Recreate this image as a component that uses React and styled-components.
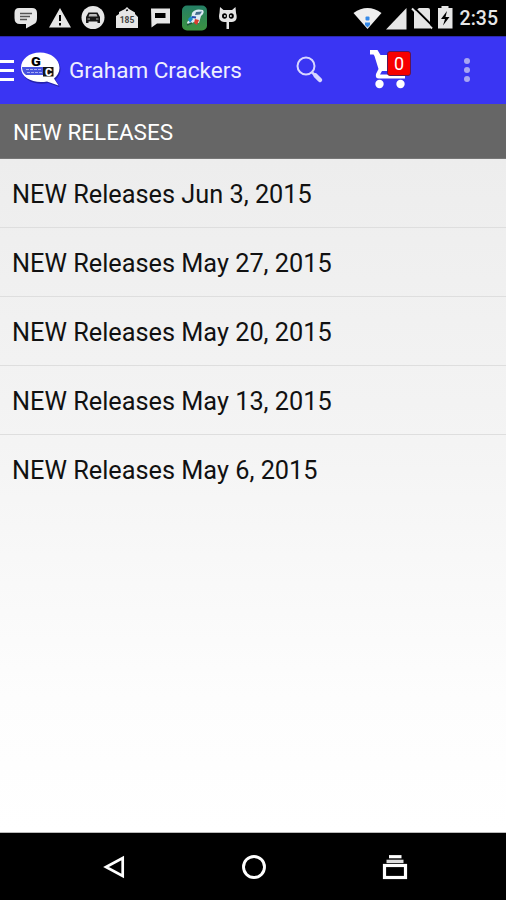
import React from "react";
import styled, { createGlobalStyle } from "styled-components";

const releases = [
  "NEW Releases Jun 3, 2015",
  "NEW Releases May 27, 2015",
  "NEW Releases May 20, 2015",
  "NEW Releases May 13, 2015",
  "NEW Releases May 6, 2015",
];

function StatusBar() {
  return (
    <StatusContainer>
      <Notifications>
        <svg width="24" height="26" viewBox="0 0 24 26" fill="#e6e6e6">
          <path d="M5 3H18Q23 3 23 8V13Q23 18 20 19L12 23.5V19H6Q0.500 19 0.500 13V8Q0.500 3 5 3Z" />
          <path d="M6 8.500H18M6 11.500H16M6 14.500H13" stroke="#555" strokeWidth="1.500" />
        </svg>
        <svg width="24" height="26" viewBox="0 0 24 26" fill="#e6e6e6">
          <path d="M12 3L23 22.500H1Z" />
          <path d="M12 10V16M12 18V20.500" stroke="#000" strokeWidth="2" />
        </svg>
        <svg width="24" height="26" viewBox="0 0 24 26">
          <circle cx="12" cy="12.500" r="11.500" fill="#e6e6e6" />
          <path
            d="M7.500 7.500H16.500L19 12V18H16.500V16.500H7.500V18H5V12Z"
            fill="#161616"
          />
          <path d="M8.500 9H15.500L16.500 11.500H7.500Z" fill="#bbb" />
          <path d="M6.500 14H9M15 14H17.500" stroke="#aaa" strokeWidth="1.200" />
        </svg>
        <svg width="24" height="26" viewBox="0 0 24 26">
          <path d="M1 11L4 9V7L10 4L12 2L14 4L20 7.500V9L23 12V23H1Z" fill="#e6e6e6" />
          <path d="M11 5.500L13 5" stroke="#111" strokeWidth="1.500" />
          <text x="12" y="18" textAnchor="middle" fontSize="8.500" fontWeight="700" fill="#444">
            185
          </text>
        </svg>
        <svg width="24" height="26" viewBox="0 0 24 26" fill="#e6e6e6">
          <path
            d="M2 3.500H21V18.500H8L2.500 22.500ZM6 8V13H16.500V8Z"
            fillRule="evenodd"
          />
        </svg>
        <svg width="26" height="26" viewBox="0 0 26 26">
          <defs>
            <linearGradient id="badge" x1="0" y1="0" x2="0" y2="1">
              <stop offset="0" stopColor="#247f65" />
              <stop offset="1" stopColor="#3c9240" />
            </linearGradient>
          </defs>
          <rect x="0" y="0.500" width="25" height="25" rx="5" fill="url(#badge)" />
          <path d="M10 8Q13 3 21 5Q23 8 19 11L17 18L12 17L6 20L5 17L9 14Z" fill="#dceaf2" />
          <path d="M14 7L20 6.500L18 9.500L13 10Z" fill="#426c8d" />
          <path d="M6 14L9 11L11 14L8 18Z" fill="#1c8cc9" />
          <path d="M13 14L17 15L15 20L12 18Z" fill="#d93c2f" />
          <path d="M10 12L14 12.500" stroke="#2549ad" strokeWidth="2" />
          <path d="M5 20L10 18" stroke="#20563b" strokeWidth="1.500" />
        </svg>
        <svg width="22" height="26" viewBox="0 0 22 26" fill="#e6e6e6">
          <path d="M2 2L5.500 5H14L17.500 2L18 8Q20.500 16 14 17H11V24H8.500V17H6Q-0.500 16 1.500 8Z" />
          <ellipse cx="6.500" cy="11" rx="2.500" ry="2.700" fill="#000" />
          <ellipse cx="13.300" cy="11" rx="2.500" ry="2.700" fill="#000" />
          <circle cx="6.900" cy="11" r="1" />
          <circle cx="12.900" cy="11" r="1" />
        </svg>
      </Notifications>
      <SystemInfo>
        <svg width="29" height="26" viewBox="0 0 29 26">
          <path d="M0.500 8Q14.500 -2 28.500 8L14.500 24Z" fill="#eee" />
          <rect x="12.500" y="11.500" width="4" height="4" rx="1" fill="#3489e8" />
          <path d="M12 17.500H17V20L14.500 22.500L12 20Z" fill="#3489e8" />
        </svg>
        <svg width="21" height="26" viewBox="0 0 21 26">
          <path d="M20.500 3V24.500H0Z" fill="#e6e6e6" />
        </svg>
        <svg width="22" height="26" viewBox="0 0 22 26">
          <path d="M8 3H17Q19 3 19 5V23.500H3V7Z" fill="#e6e6e6" />
          <path d="M2.500 2L22.500 22" stroke="#000" strokeWidth="2" />
          <path d="M1 3.500L21 23.500" stroke="#e6e6e6" strokeWidth="2" />
        </svg>
        <svg width="16" height="26" viewBox="0 0 16 26">
          <path d="M4.500 1H11.500V3H15.500V23.500H1V3H4.500Z" fill="#e6e6e6" />
          <path d="M10 6L4 14H8L6 20.500L12.500 12H8.500Z" fill="#000" />
        </svg>
        <Clock>2:35</Clock>
      </SystemInfo>
    </StatusContainer>
  );
}

function Logo() {
  return (
    <svg width="42" height="38" viewBox="0 0 42 38">
      <path
        d="M21 3C31.500 3 40.500 9 40.500 18C40.500 22.500 38.500 26 35.500 28.500L39.500 36L28 32C16 34.500 2 30 2 18C2 9 10 3 21 3Z"
        fill="#1b198e"
        opacity="0.700"
      />
      <path
        d="M20 1.500C31 1.500 39.500 8 39.500 17C39.500 21.500 37 25 34 27.500L38.500 34.500L27 30.500C14 33 1 27 1 17C1 8 9 1.500 20 1.500Z"
        fill="#fff"
      />
      <path d="M2 16H23V24H6Q2 21 2 16Z" fill="#4753df" />
      <path d="M6 18.500H22M7 21.500H23" stroke="#a9aef5" strokeWidth="1" strokeDasharray="3 1" />
      <rect x="23" y="16" width="10.500" height="9.500" fill="#151515" />
      <LogoLetter x="13.200" y="15" fontSize="12" transform="scale(1.200 1)">
        G
      </LogoLetter>
      <LogoLetter x="28.500" y="25" fontSize="11" fill="#fff">
        C
      </LogoLetter>
    </svg>
  );
}

function AppBar() {
  return (
    <AppBarContainer>
      <MenuIcon>
        <span />
        <span />
        <span />
      </MenuIcon>
      <Logo />
      <AppTitle>Graham Crackers</AppTitle>
      <Actions>
        <svg width="28" height="28" viewBox="0 0 28 28" fill="none" stroke="#d8d7ff">
          <circle cx="10" cy="10" r="8.500" strokeWidth="2" />
          <path d="M16 16.500L19 19" strokeWidth="2.500" />
          <path d="M19.500 19.500L24 24" strokeWidth="4.500" strokeLinecap="round" />
        </svg>
        <Cart>
          <svg width="40" height="40" viewBox="0 0 40 40" fill="#fff">
            <path d="M0 0H7.500L10.500 5H32L27 19Q26 21 23 21H12L10 24.500H35V28.500H9Q5 28.500 6 24L8.500 19L4.500 6L3.500 4.500H0Z" />
            <circle cx="9.500" cy="34" r="4.200" />
            <circle cx="30.500" cy="34" r="4.200" />
          </svg>
          <CartCount>0</CartCount>
        </Cart>
        <Overflow>
          <span />
          <span />
          <span />
        </Overflow>
      </Actions>
    </AppBarContainer>
  );
}

function NavBar() {
  return (
    <NavContainer>
      <svg width="24" height="26" viewBox="0 0 24 26" fill="none" stroke="#fff">
        <path d="M20.700 4V22L4 13Z" strokeWidth="2.700" />
      </svg>
      <svg width="26" height="26" viewBox="0 0 26 26" fill="none" stroke="#fff">
        <circle cx="13" cy="13" r="10.500" strokeWidth="2.900" />
      </svg>
      <svg width="26" height="26" viewBox="0 0 26 26" fill="none" stroke="#fff">
        <rect x="2.500" y="11.500" width="21" height="12" strokeWidth="3.200" />
        <path d="M4.500 7.400H21.500" stroke="#ddd" strokeWidth="3.400" />
        <path d="M7 2.700H19.500" strokeWidth="3.200" />
      </svg>
    </NavContainer>
  );
}

function App() {
  return (
    <Screen>
      <GlobalStyle />
      <StatusBar />
      <AppBar />
      <SectionTitle>NEW RELEASES</SectionTitle>
      <ReleaseList>
        {releases.map((release) => (
          <ReleaseRow key={release}>{release}</ReleaseRow>
        ))}
      </ReleaseList>
      <NavBar />
    </Screen>
  );
}

const GlobalStyle = createGlobalStyle`
  body {
    margin: 0;
    background: #000;
  }
  * {
    box-sizing: border-box;
  }
  svg {
    display: block;
    flex-shrink: 0;
  }
`;

const Screen = styled.div`
  display: flex;
  flex-direction: column;
  width: 506px;
  height: 900px;
  overflow: hidden;
  font-family: Roboto, sans-serif;
`;

const StatusContainer = styled.div`
  display: flex;
  justify-content: space-between;
  align-items: flex-start;
  height: 36px;
  padding: 5px 8px 0 14px;
  background: #000;
`;

const Notifications = styled.div`
  display: flex;
  gap: 9.700px;
`;

const SystemInfo = styled.div`
  display: flex;
  gap: 4px;
`;

const Clock = styled.span`
  margin-left: 3px;
  color: #e6e6e6;
  font-size: 19.500px;
  font-weight: 500;
  line-height: 28px;
`;

const LogoLetter = styled.text`
  font-family: Roboto, sans-serif;
  font-weight: 900;
  text-anchor: middle;
`;

const AppBarContainer = styled.header`
  display: flex;
  align-items: center;
  height: 68px;
  padding: 0 36px 2px 0;
  background: #3a35f3;
  border-top: 1px solid #2c29ae;
`;

const MenuIcon = styled.div`
  display: flex;
  flex-direction: column;
  gap: 6px;
  width: 14px;
  margin-right: 6px;
  padding-top: 2px;
  span {
    height: 3px;
    background: #fff;
  }
`;

const AppTitle = styled.h1`
  margin: 0 0 0 7px;
  color: #eeeeff;
  font-size: 22.500px;
  font-weight: 400;
  line-height: 30px;
  white-space: nowrap;
`;

const Actions = styled.div`
  display: flex;
  align-items: center;
  margin-left: auto;
`;

const Cart = styled.div`
  position: relative;
  width: 40px;
  height: 40px;
  margin: 0 54px 0 46px;
`;

const CartCount = styled.span`
  position: absolute;
  top: 1px;
  left: 17px;
  width: 24px;
  height: 25px;
  border: 1px solid #5a1558;
  border-radius: 3px;
  background: #f60000;
  color: #fff;
  font-size: 18px;
  line-height: 23px;
  text-align: center;
`;

const Overflow = styled.div`
  display: flex;
  flex-direction: column;
  gap: 3px;
  span {
    width: 6px;
    height: 6px;
    border-radius: 50%;
    background: #a9a7f2;
  }
`;

const SectionTitle = styled.h2`
  height: 55px;
  margin: 0;
  padding-left: 13px;
  border-bottom: 1px solid #777;
  background: #666;
  color: #fff;
  font-size: 22.500px;
  font-weight: 400;
  line-height: 56px;
`;

const ReleaseList = styled.ul`
  flex: 1;
  margin: 0;
  padding: 0;
  list-style: none;
  background: linear-gradient(#ededed 0%, #f4f4f4 42%, #fdfdfd 80%, #fff 100%);
  border-bottom: 1px solid #bbb;
`;

const ReleaseRow = styled.li`
  height: 68.900px;
  padding-left: 12px;
  color: #111;
  font-size: 25.300px;
  line-height: 72px;
  white-space: nowrap;
  &:not(:last-child) {
    border-bottom: 1px solid #dedede;
  }
`;

const NavContainer = styled.nav`
  display: flex;
  justify-content: space-between;
  height: 67px;
  padding: 21px 98.500px 0 101.500px;
  background: #000;
`;

export default App;
